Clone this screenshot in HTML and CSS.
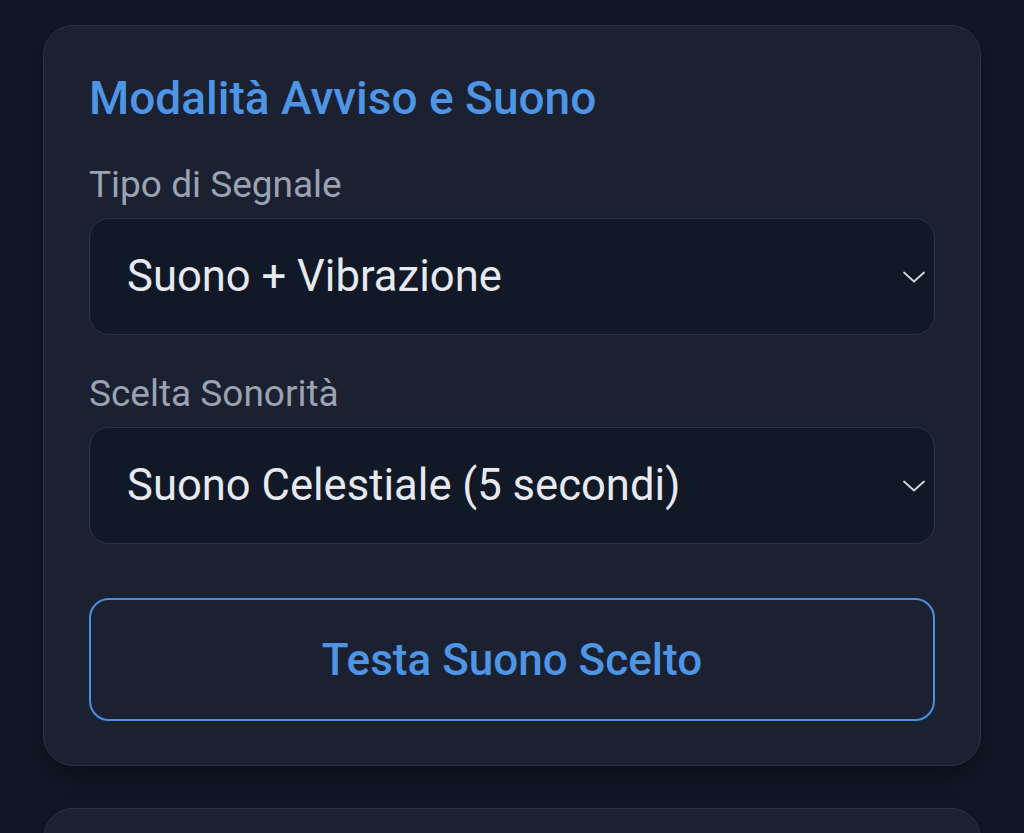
FILE: index.html
```html
<!DOCTYPE html>
<html lang="it">
<head>
<meta charset="utf-8">
<title>Modalità Avviso e Suono</title>
<link rel="stylesheet" href="styles.css">
</head>
<body>
<main class="page">
  <section class="card">
    <h2 class="card-title">Modalità Avviso e Suono</h2>
    <div class="field">
      <label class="field-label">Tipo di Segnale</label>
      <div class="select">
        <span class="select-value">Suono + Vibrazione</span>
        <svg class="chevron" viewBox="0 0 24 12" width="24" height="12" aria-hidden="true"><path d="M2 1.5 L12 10.5 L22 1.5" fill="none" stroke="#d3d7de" stroke-width="1.8" stroke-linecap="round" stroke-linejoin="round"/></svg>
      </div>
    </div>
    <div class="field">
      <label class="field-label">Scelta Sonorità</label>
      <div class="select">
        <span class="select-value">Suono Celestiale (5 secondi)</span>
        <svg class="chevron" viewBox="0 0 24 12" width="24" height="12" aria-hidden="true"><path d="M2 1.5 L12 10.5 L22 1.5" fill="none" stroke="#d3d7de" stroke-width="1.8" stroke-linecap="round" stroke-linejoin="round"/></svg>
      </div>
    </div>
    <button class="test-btn" type="button">Testa Suono Scelto</button>
  </section>
  <section class="card card-next"></section>
</main>
</body>
</html>
```

FILE: styles.css
```css
* { box-sizing: border-box; }
html, body {
  margin: 0;
  padding: 0;
  background: #111726;
  height: 100%;
  overflow: hidden;
}
body {
  font-family: Roboto, "Noto Sans", sans-serif;
}
.page {
  padding: 25px 43px 0;
  display: flex;
  flex-direction: column;
  gap: 42px;
}
.card {
  background: #1b2130;
  border: 1.5px solid #2a3142;
  border-radius: 30px;
  padding: 48px 45px 44px;
  display: flex;
  flex-direction: column;
  box-shadow: 0 10px 22px rgba(0, 0, 0, 0.35);
}
.card-next {
  min-height: 200px;
}
.card-title {
  margin: 0;
  font-size: 46px;
  line-height: 48px;
  font-weight: 500;
  color: #4f95e6;
}
.field {
  display: flex;
  flex-direction: column;
  gap: 13px;
  margin-top: 43px;
}
.field + .field {
  margin-top: 39px;
}
.field-label {
  font-size: 37px;
  line-height: 40px;
  color: #9aa3b2;
}
.select {
  height: 117px;
  background: #111826;
  border: 1.5px solid #2b3344;
  border-radius: 20px;
  display: flex;
  align-items: center;
  justify-content: space-between;
  padding: 0 8px 0 37px;
}
.select-value {
  font-size: 43.6px;
  color: #e6e9ef;
}
.chevron {
  display: block;
}
.test-btn {
  margin-top: 54px;
  height: 123px;
  background: transparent;
  border: 2px solid #4a8fe0;
  border-radius: 20px;
  font-family: inherit;
  font-size: 44px;
  font-weight: 500;
  color: #4f95e6;
}
```
